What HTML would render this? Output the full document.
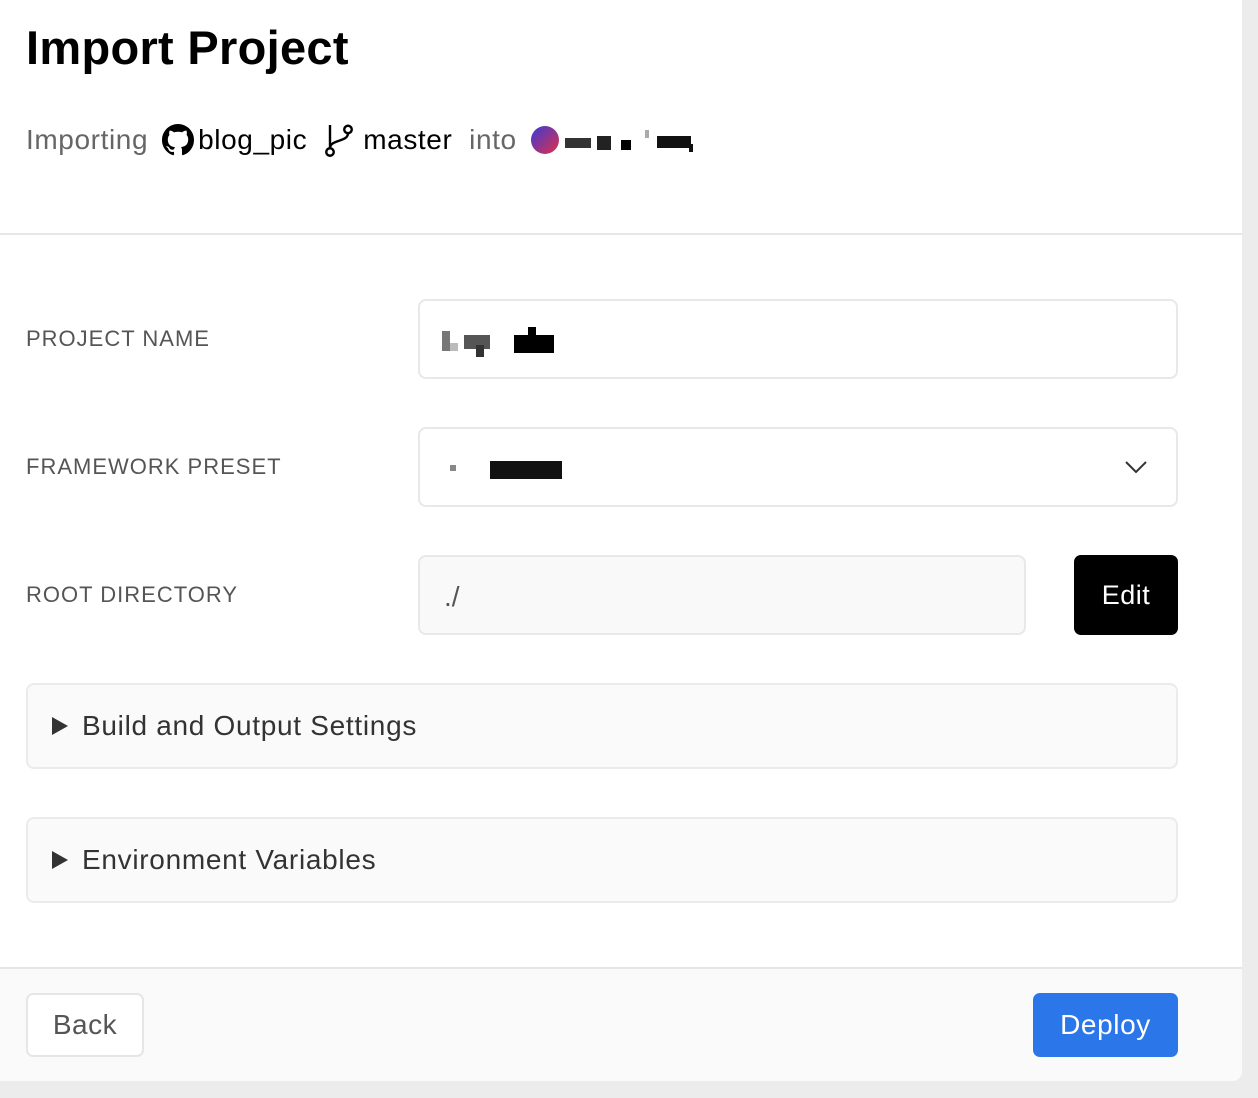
<!DOCTYPE html>
<html><head><meta charset="utf-8">
<style>
*{box-sizing:border-box;margin:0;padding:0}
body{width:1258px;height:1098px;background:#ececec;font-family:"Liberation Sans",sans-serif;position:relative;overflow:hidden}
.card{position:absolute;left:0;top:0;width:1242px;height:1081px;background:#fff;border-radius:0 0 10px 0;overflow:hidden}
h1{position:absolute;left:26px;top:20px;font-size:47px;font-weight:700;color:#000;letter-spacing:0.3px}
.imp{position:absolute;left:26px;top:122px;font-size:28px;color:#666;display:flex;align-items:center;white-space:nowrap;letter-spacing:0.6px}
.imp b{font-weight:400;color:#000}
.hr{position:absolute;left:0;top:233px;width:1242px;height:2px;background:#e6e6e6}
.lbl{position:absolute;left:26px;font-size:22px;color:#555;letter-spacing:1px}
.inp{position:absolute;left:418px;width:760px;height:80px;border:2px solid #e8e8e8;border-radius:8px;background:#fff}
.edit{position:absolute;left:1074px;top:555px;width:104px;height:80px;background:#000;color:#fff;border-radius:7px;font-size:27px;letter-spacing:0.5px;display:flex;align-items:center;justify-content:center}
.sec{position:absolute;left:26px;width:1152px;height:86px;border:2px solid #ebebeb;border-radius:8px;background:#fafafa;font-size:28px;color:#333;display:flex;align-items:center;padding-left:24px;letter-spacing:0.7px}
.sec svg{margin-right:14px}
.foot{position:absolute;left:0;top:967px;width:1242px;height:114px;background:#fafafa;border-top:2px solid #e6e6e6}
.back{position:absolute;left:26px;top:993px;width:118px;height:64px;border:2px solid #e6e6e6;border-radius:7px;background:#fff;font-size:28px;color:#555;display:flex;align-items:center;justify-content:center;letter-spacing:0.5px}
.deploy{position:absolute;left:1033px;top:993px;width:145px;height:64px;border-radius:7px;background:#2b77e9;color:#fff;font-size:28px;display:flex;align-items:center;justify-content:center;letter-spacing:0.6px}
.px{position:absolute}
</style></head><body>
<div class="card">
<h1>Import Project</h1>
<div class="imp">Importing
<svg width="32" height="32" viewBox="0 0 16 16" style="margin:0 4px 0 14px"><path fill="#000" d="M8 0C3.58 0 0 3.58 0 8c0 3.54 2.29 6.530 5.47 7.59.4.07.55-.17.55-.38v-1.33c-2.23.48-2.7-1.07-2.7-1.07-.36-.92-.89-1.17-.89-1.17-.73-.5.06-.49.06-.49.8.06 1.23.83 1.23.83.71 1.22 1.87.87 2.330.66.07-.52.28-.87.51-1.07-1.78-.2-3.65-.89-3.65-3.95 0-.87.31-1.59.82-2.15-.08-.2-.36-1.02.08-2.12 0 0 .67-.21 2.2.82A7.6 7.6 0 0 1 8 3.86c.68 0 1.36.09 2 .27 1.53-1.04 2.2-.82 2.2-.82.44 1.1.16 1.92.08 2.12.51.56.82 1.27.82 2.15 0 3.07-1.87 3.75-3.65 3.95.29.25.54.73.54 1.48v2.2c0 .21.15.46.55.38A8 8 0 0 0 16 8c0-4.420-3.58-8-8-8z"/></svg>
<b>blog_pic</b>
<svg width="36" height="36" viewBox="0 0 24 24" fill="none" stroke="#000" stroke-width="1.6" style="margin:0 6px 0 14px"><circle cx="6" cy="20" r="2.5"/><circle cx="18" cy="5" r="2.5"/><path d="M6 17.5V2M18 7.5c0 6-12 4-12 10"/></svg>
<b>master</b>&nbsp;&nbsp;into
<span style="display:inline-block;width:28px;height:28px;border-radius:50%;background:linear-gradient(135deg,#3a3ad6,#e0304a);margin-left:14px"></span>
<span style="display:inline-block;width:138px;height:28px;position:relative">
<i class="px" style="left:6px;top:12px;width:26px;height:10px;background:#333"></i>
<i class="px" style="left:38px;top:10px;width:14px;height:14px;background:#222"></i>
<i class="px" style="left:62px;top:14px;width:10px;height:10px;background:#000"></i>
<i class="px" style="left:86px;top:4px;width:4px;height:8px;background:#aaa"></i>
<i class="px" style="left:98px;top:10px;width:34px;height:12px;background:#111"></i>
<i class="px" style="left:130px;top:18px;width:4px;height:8px;background:#111"></i>
</span></div>
<div class="hr"></div>

<div class="lbl" style="top:326px">PROJECT NAME</div>
<div class="inp" style="top:299px">
<i class="px" style="left:22px;top:30px;width:8px;height:20px;background:#777"></i>
<i class="px" style="left:30px;top:42px;width:8px;height:8px;background:#bbb"></i>
<i class="px" style="left:44px;top:34px;width:26px;height:14px;background:#555"></i>
<i class="px" style="left:56px;top:44px;width:8px;height:12px;background:#333"></i>
<i class="px" style="left:94px;top:34px;width:40px;height:18px;background:#000"></i>
<i class="px" style="left:108px;top:26px;width:8px;height:10px;background:#000"></i>
</div>
<div class="lbl" style="top:454px">FRAMEWORK PRESET</div>
<div class="inp" style="top:427px">
<i class="px" style="left:30px;top:36px;width:6px;height:6px;background:#888"></i>
<i class="px" style="left:70px;top:32px;width:72px;height:18px;background:#111"></i>
<svg class="px" style="left:704px;top:30px" width="24" height="16" viewBox="0 0 24 16"><path d="M2 3l10 10L22 3" fill="none" stroke="#333" stroke-width="2"/></svg>
</div>
<div class="lbl" style="top:582px">ROOT DIRECTORY</div>
<div class="inp" style="top:555px;width:608px;background:#f9f9f9;font-size:28px;color:#555;padding:24px 0 0 24px">./</div>
<div class="edit">Edit</div>

<div class="sec" style="top:683px"><svg width="16" height="18" viewBox="0 0 16 18"><path d="M0 0L16 9L0 18Z" fill="#333"/></svg>Build and Output Settings</div>
<div class="sec" style="top:817px"><svg width="16" height="18" viewBox="0 0 16 18"><path d="M0 0L16 9L0 18Z" fill="#333"/></svg>Environment Variables</div>

<div class="foot"></div>
<div class="back">Back</div>
<div class="deploy">Deploy</div>
</div>
</body></html>
